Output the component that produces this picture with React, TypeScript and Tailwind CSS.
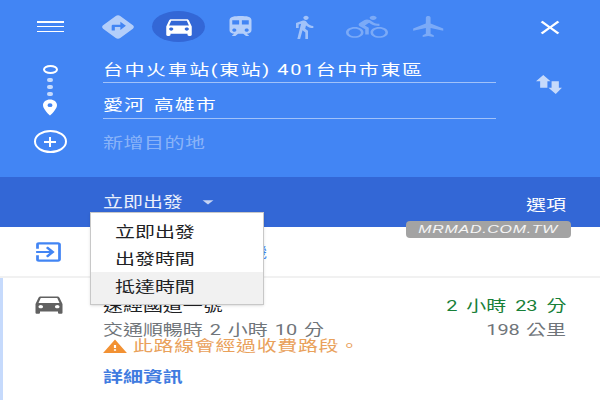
import type { ReactNode } from "react";
import {
  MdDirections,
  MdDirectionsCar,
  MdTrain,
  MdDirectionsWalk,
  MdDirectionsBike,
  MdFlight,
  MdClose,
  MdExitToApp,
  MdPlace,
  MdArrowDropDown,
  MdWarning,
} from "react-icons/md";

// the whole screenshot is stretched sideways, so text is widened to match
const Wide = ({ children, className = "" }: { children: ReactNode; className?: string }) => (
  <span className={`inline-block origin-left scale-x-[1.33] whitespace-nowrap ${className}`}>{children}</span>
);

const WideRight = ({ children, className = "" }: { children: ReactNode; className?: string }) => (
  <span className={`inline-block origin-right scale-x-[1.33] whitespace-nowrap ${className}`}>{children}</span>
);

const MenuItem = ({ label, active }: { label: string; active?: boolean }) => (
  <div className={`flex items-center pl-[24px] ${active ? "bg-[#f1f1f1] h-[32px] pb-[2px]" : "h-[27px]"}`}>
    <Wide>{label}</Wide>
  </div>
);

const App = () => {
  return (
    <div className="relative w-[600px] h-[400px] overflow-hidden bg-white text-[15px] leading-[20px] font-['Roboto','Noto_Sans_CJK_TC',sans-serif]">
      {/* Directions header */}
      <div className="h-[177px] bg-[#4285f4] text-white flex">
        <div className="w-[103px] flex flex-col items-center pr-[3px]">
          <div className="mt-[21px] w-[27px] h-[11px] flex flex-col justify-between">
            <div className="h-[1.5px] bg-white" />
            <div className="h-[1.5px] bg-white" />
            <div className="h-[1.5px] bg-white" />
          </div>
          <div className="mt-[33px] w-[15px] h-[9px] rounded-[50%] border-2 border-white" />
          <div className="mt-[4px] w-[6px] h-[4px] rounded-full bg-white/70" />
          <div className="mt-[3px] w-[6px] h-[4px] rounded-full bg-white/70" />
          <div className="mt-[3px] w-[6px] h-[4px] rounded-full bg-white/70" />
          <MdPlace preserveAspectRatio="none" className="mt-[2px] w-[24px] h-[19px]" />
          <div className="mt-[13px] w-[33px] h-[23px] rounded-[50%] border-2 border-white flex items-center justify-center">
            <svg viewBox="0 0 12 10" className="w-[12px] h-[10px]" fill="currentColor">
              <path d="M5 0h2v4h5v2H7v4H5V6H0V4h5z" />
            </svg>
          </div>
        </div>

        <div className="w-[393px]">
          {/* Travel modes */}
          <div className="h-[44px] pt-[11px] flex items-start">
            <div className="w-[49px] h-[31px] flex items-center justify-start -ml-[4px]">
              <MdDirections preserveAspectRatio="none" className="w-[38px] h-[28px] opacity-60" />
            </div>
            <div className="ml-[4px] w-[53px] h-[31px] rounded-[50%] bg-[#3367d6] flex items-center justify-center">
              <MdDirectionsCar preserveAspectRatio="none" className="w-[34px] h-[25px]" />
            </div>
            <div className="w-[72px] h-[31px] flex items-center justify-center">
              <MdTrain preserveAspectRatio="none" className="w-[33px] h-[25px] opacity-60 ml-[-2px]" />
            </div>
            <div className="w-[54px] h-[31px] flex items-center justify-center">
              <MdDirectionsWalk preserveAspectRatio="none" className="w-[32px] h-[26px] opacity-50" />
            </div>
            <div className="w-[72px] h-[31px] flex items-center justify-center">
              <MdDirectionsBike preserveAspectRatio="none" className="w-[42px] h-[26px] opacity-30" />
            </div>
            <div className="w-[52px] h-[31px] flex items-center justify-center">
              <MdFlight preserveAspectRatio="none" className="w-[38px] h-[25px] opacity-30" />
            </div>
          </div>
          {/* Route inputs */}
          <div className="mt-[11px] h-[28px] border-b border-white/50 pt-[5px]">
            <Wide className="tracking-[1.2px]">台中火車站(東站) 401台中市東區</Wide>
          </div>
          <div className="mt-[8px] h-[28px] border-b border-white/50 pt-[4px]">
            <Wide className="tracking-[0.8px] [word-spacing:2px]">愛河 高雄市</Wide>
          </div>
          <div className="mt-[14px] text-white/40">
            <Wide className="tracking-[0.4px]">新增目的地</Wide>
          </div>
        </div>

        <div className="flex-1 flex flex-col items-center pl-[3px]">
          <MdClose preserveAspectRatio="none" className="mt-[16px] w-[32px] h-[23px]" />
          <svg viewBox="0 0 26 18" preserveAspectRatio="none" className="mt-[36px] w-[27px] h-[19px] opacity-70" fill="currentColor">
            <path d="M7 0l7 6h-3v6H4V6H0zM19 18l-7-6h3V6h7v6h3z" />
          </svg>
        </div>
      </div>

      {/* Departure bar */}
      <div className="h-[50px] bg-[#3367d6] text-white flex justify-between pl-[103px] pr-[34px]">
        <div className="flex pt-[15px] items-start text-white/90">
          <Wide>立即出發</Wide>
          <MdArrowDropDown preserveAspectRatio="none" className="ml-[32px] w-[26px] h-[20px] opacity-80" />
        </div>
        <div className="pt-[18px]">
          <WideRight>選項</WideRight>
        </div>
      </div>

      {/* Send to phone row */}
      <div className="h-[51px] border-b-2 border-[#f1f1f1] flex items-center">
        <div className="w-[104px] pl-[32px]">
          <MdExitToApp preserveAspectRatio="none" className="w-[33px] h-[26px] text-[#4285f4]" />
        </div>
        <Wide className="text-[#4285f4] tracking-[0.4px]">將路線傳送至手機</Wide>
      </div>

      {/* Route card */}
      <div className="h-[122px] border-l-[3px] border-[#c6dafc] flex">
        <div className="w-[100px] pl-[28px] pt-[13px]">
          <MdDirectionsCar preserveAspectRatio="none" className="w-[36px] h-[26px] text-[#616161]" />
        </div>
        <div className="flex-1 pr-[34px] pt-[18px]">
          <div className="flex justify-between text-[#202124]">
            <Wide>速經國道一號</Wide>
            <WideRight className="text-[#188038] [word-spacing:3px]">2 小時 23 分</WideRight>
          </div>
          <div className="mt-[4px] flex justify-between text-[#70757a]">
            <Wide className="[word-spacing:1.5px]">交通順暢時 2 小時 10 分</Wide>
            <WideRight className="[word-spacing:1px]">198 公里</WideRight>
          </div>
          <div className="flex items-center h-[14px] -mt-[1px] text-[#e9a15b]">
            <MdWarning preserveAspectRatio="none" className="w-[26px] h-[17px] text-[#f29133] -ml-[1px] shrink-0" />
            <Wide className="ml-[5px] tracking-[0.5px]">此路線會經過收費路段。</Wide>
          </div>
          <div className="mt-[14px] font-bold text-[#3f7be0]">
            <Wide>詳細資訊</Wide>
          </div>
        </div>
      </div>

      {/* Time dropdown */}
      <div className="absolute left-[90px] top-[212px] w-[174px] h-[93px] pt-[6px] bg-white border border-[#c8c8c8] shadow-sm text-[#202124] flex flex-col">
        <MenuItem label="立即出發" />
        <MenuItem label="出發時間" />
        <MenuItem label="抵達時間" active />
      </div>

      {/* Watermark */}
      <div className="absolute left-[406px] top-[221px] w-[165px] h-[17px] rounded-[4px] bg-[#a3a3a3] flex items-center justify-center text-white/90 italic text-[11px] leading-none tracking-[0.5px] font-['Liberation_Sans',sans-serif]">
        <span className="inline-block scale-x-[1.45]">MRMAD.COM.TW</span>
      </div>
    </div>
  );
};

export default App;
